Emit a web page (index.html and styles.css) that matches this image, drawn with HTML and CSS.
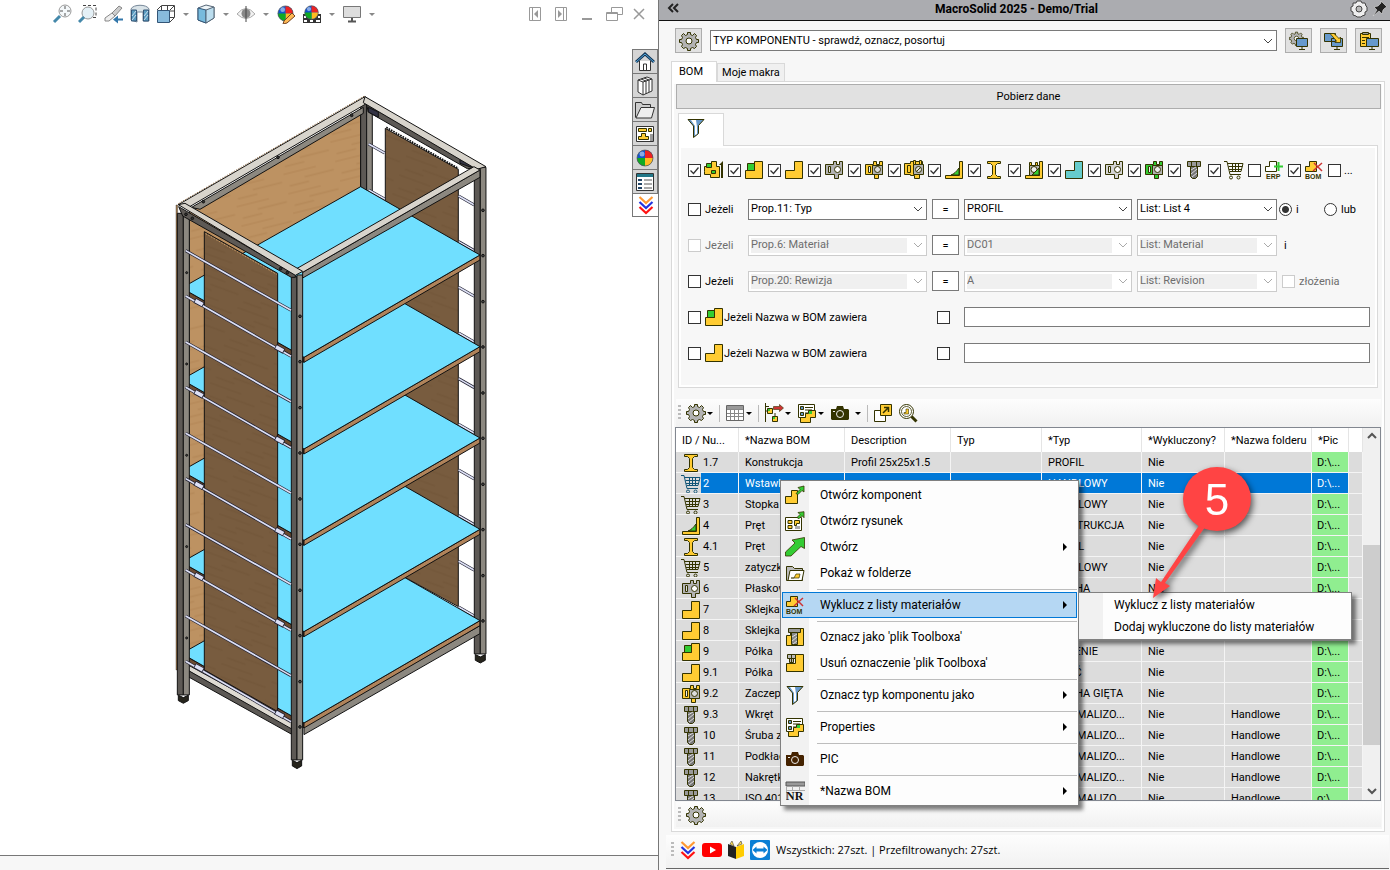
FILE: index.html
```html
<!DOCTYPE html>
<html lang="pl">
<head>
    <meta charset="UTF-8">
    <meta name="viewport" content="width=device-width, initial-scale=1.0">
    <title>MacroSolid 2025</title>
    <link rel="stylesheet" href="styles.css">
</head>
<body>

<!-- Icons -->
<svg class="defs" width="0" height="0" aria-hidden="true">
    <symbol id="part" viewBox="0 0 20 20"><path d="M1.500 10.500h9v-9h8v17h-17z" fill="#fc3" stroke="#330"/></symbol>
    <symbol id="partb" viewBox="0 0 20 20"><path d="M1.500 10.500h9v-9h8v17h-17z" fill="#6cc" stroke="#330"/></symbol>
    <symbol id="asm" viewBox="0 0 20 20"><path d="M1.500 10.500h9v-9h8v17h-17z" fill="#fc3" stroke="#330"/><path d="M3.500 3.500h7v7h-7z" fill="#3c3" stroke="#330"/></symbol>
    <symbol id="asmtop" viewBox="0 0 20 20"><path d="M.5 11.500v-5h7v-5h5v5h3v11h-9v-3h-6z" fill="#fc3" stroke="#330"/><path d="M2.500 3.500h5v4h-5zM7.500 10.500h4v3h-4z" fill="#3c3" stroke="#330"/><path d="M15 5l4-4v17h-2V5z" fill="#330"/></symbol>
    <symbol id="sheet" viewBox="0 0 20 20"><path d="M1.500 4.500h8v-3h3v3h3v-3h3v13h-4v4h-4v-4h-9z" fill="#b3b3b3" stroke="#330"/><path d="M4.500 6.500h2v6h-2z" fill="#ddd" stroke="#330"/><circle cx="13.500" cy="9.500" r="3" fill="#fff" stroke="#330"/></symbol>
    <symbol id="sheetl" viewBox="0 0 20 20"><path d="M1.500 4.500h8v-3h3v3h3v-3h3v13h-4v4h-4v-4h-9z" fill="#d5d5d5" stroke="#330"/><path d="M4.500 6.500h2v6h-2z" fill="#eee" stroke="#330"/><circle cx="13.500" cy="9.500" r="3" fill="#fff" stroke="#330"/></symbol>
    <symbol id="sheety" viewBox="0 0 20 20"><path d="M1.500 4.500h8v-3h3v3h3v-3h3v13h-4v4h-4v-4h-9z" fill="#fc3" stroke="#330"/><path d="M8.500 5.500h10v9h-10z" fill="#b3b3b3" stroke="#330"/><path d="M4.500 6.500h2v6h-2z" fill="#eee" stroke="#330"/><circle cx="13.500" cy="9.500" r="3" fill="#ddd" stroke="#330"/></symbol>
    <symbol id="sheetg" viewBox="0 0 20 20"><path d="M1.500 4.500h8v-3h3v3h3v-3h3v13h-4v4h-4v-4h-9z" fill="#3c3" stroke="#330"/><path d="M8.500 5.500h10v9h-10z" fill="#b3b3b3" stroke="#330"/><path d="M4.500 6.500h2v6h-2z" fill="#eee" stroke="#330"/><circle cx="13.500" cy="9.500" r="3" fill="#eee" stroke="#330"/></symbol>
    <symbol id="sheetm" viewBox="0 0 20 20"><path d="M.5 3.500h6v-2h12v13h-3v4h-5v-3h-4v-1h-6z" fill="#fc3" stroke="#330"/><path d="M3.500 5.500h3v7h-3z" fill="#fc3" stroke="#330"/><path d="M9.500 4.500h10v10h-10z" fill="#b3b3b3" stroke="#330"/><path d="M9.500.5h2v4h-2zM15.500.5h2v4h-2z" fill="#fc3" stroke="#330"/><circle cx="14.500" cy="9.500" r="3" fill="#ddd" stroke="#330"/><path d="M12.500 11.500l4-4" stroke="#330"/></symbol>
    <symbol id="angle" viewBox="0 0 20 20"><path d="M7 15c3-1 5-3 8-7v7z" fill="#3c3" stroke="#330"/><path d="M15.500 1.500h3v17h-17v-3h14z" fill="#fc3" stroke="#330"/></symbol>
    <symbol id="beam" viewBox="0 0 20 20"><path d="M3.500 1.500h13v2h-3l-2 2v9l2 2h3v2h-13v-2h3l2-2v-9l-2-2h-3z" fill="#fc3" stroke="#330"/></symbol>
    <symbol id="anglem" viewBox="0 0 20 20"><path d="M15.500 1.500h3v17h-17v-3h14z" fill="#fc3" stroke="#330"/><path d="M5.500 15.500v-10h10v10z" fill="#b3b3b3" stroke="#330"/><path d="M5.500 2.500h2v3h-2zM11.500 2.500h2v3h-2z" fill="#fc3" stroke="#330"/><circle cx="10" cy="9.500" r="3" fill="#eee" stroke="#330"/><path d="M8 15l7-7v7z" fill="#3c3" stroke="#330"/></symbol>
    <symbol id="bolt" viewBox="0 0 20 20"><path d="M3.500 1.500h13v5h-13z" fill="#999" stroke="#330"/><path d="M7.500 1.500v5m5-5v5" stroke="#330"/><path d="M6.500 6.500h7v10l-2 2h-3l-2-2z" fill="#777" stroke="#330"/><path d="M7 10l5-3M7 14l6-5M8 17l5-4" stroke="#ddd"/></symbol>
    <symbol id="cart" viewBox="0 0 20 20" fill="none"><path d="M0 1.500h3l3 13h11M4 3.500h15l-2 8H6M4.500 6.500h14M5 9.500h13M8.500 4v7M11.500 4v7M14.500 4v7" stroke="currentColor"/><circle cx="7" cy="17.500" r="1.500" stroke="currentColor"/><circle cx="14.500" cy="17.500" r="1.500" stroke="currentColor"/></symbol>
    <symbol id="erp" viewBox="0 0 20 20"><path d="M1.500 6.500h4v-5h7v10h-11z" fill="#fff" stroke="#330"/><path d="M14.500 2v9M10 6.500h9" stroke="#3c3" stroke-width="2"/><text x="2" y="19" class="tag">ERP</text></symbol>
    <symbol id="bomx" viewBox="0 0 20 20"><path d="M1.500 6.500h4v-5h7v10h-11z" fill="#fc3" stroke="#330"/><path d="M10 3l8 8M18 3l-9 8" stroke="#c33" stroke-width="1.500"/><text x="1" y="19" class="tag">BOM</text></symbol>
    <symbol id="gear" viewBox="0 0 20 20"><path d="M8.500 1.500h3v2l2 1 2-2 2 2-1 2 1 2h2v3h-2l-1 2 1 2-2 2-2-1-2 1v2h-3v-2l-2-1-2 1-2-2 1-2-1-2h-2v-3h2l1-2-1-2 2-2 2 2 2-1z" fill="#b3b3b3" stroke="#330"/><circle cx="10" cy="10" r="3" fill="#fff" stroke="#330"/></symbol>
    <symbol id="funnel" viewBox="0 0 20 20"><path d="M2 1.500h16l-5.500 6v8l-5 4V8z" fill="#69c" stroke="#330"/><path d="M5 2h5l1 7v7l-2 1V8z" fill="#fff"/></symbol>
    <symbol id="gearpc" viewBox="0 0 20 20"><use href="#gear" width="15" height="15"/><path d="M7.500 7.500h11v8h-11z" fill="#69c" stroke="#330"/><path d="M10 18.500h6M13 16v2" stroke="#330"/></symbol>
    <symbol id="pcpc" viewBox="0 0 20 20"><path d="M.5 2.500h11v8H.5zM7.500 7.500h11v8h-11z" fill="#69c" stroke="#330"/><path d="M10 18.500h6M13 16v2" stroke="#330"/><path d="M6 2.500h4l5 5 1.500-1.500v5.500h-5.500l1.500-1.500z" fill="#fc3" stroke="#330" stroke-width=".8"/></symbol>
    <symbol id="clippc" viewBox="0 0 20 20"><path d="M1.500 2.500h10v13h-10z" fill="#fc3" stroke="#330"/><path d="M3.500 1.500h6v2h-6z" fill="#999" stroke="#330"/><path d="M3 6.500h7M3 9.500h3M3 12.500h3" stroke="#330"/><path d="M7.500 7.500h12v8h-12z" fill="#69c" stroke="#330"/><path d="M10 18.500h6M13 16v2" stroke="#330"/></symbol>
    <symbol id="grid" viewBox="0 0 20 20"><path d="M1.500 2.500h17v15h-17z" fill="#fff" stroke="#666"/><path d="M2 3h16v3H2z" fill="#999"/><path d="M2 6.500h16M2 10.500h16M2 13.500h16M5.500 6v11M9.500 6v11M13.500 6v11" stroke="#888"/></symbol>
    <symbol id="tree" viewBox="0 0 20 20"><path d="M1.500 0v19M2 8h3M2 3.500h3M11 10v4" stroke="#330"/><path d="M3.500 5.500h5v5h-5zM8.500 13.500h5v5h-5z" fill="#fc3" stroke="#330"/><path d="M4 6h2v2H4zM9 14h2v2H9z" fill="#3c3"/><path d="M9.500 3.500h6V1.500l4 3.500-4 3.500v-2h-6z" fill="#c33" stroke="#330" stroke-width=".6"/></symbol>
    <symbol id="props" viewBox="0 0 20 20"><path d="M1.500 1.500h16v13h-16z" fill="#fff" stroke="#330"/><path d="M3.500 3.500h3v3h-3zM3.500 9.500h3v3h-3z" fill="#69c" stroke="#330"/><path d="M8 4.500h8M8 7h7M8 10h3" stroke="#330"/><path d="M3.500 14.500h5v-4h3v-3h7v7h-5v5h-10z" fill="#fc3" stroke="#330"/><path d="M12 8h3v3h-3z" fill="#3c3"/></symbol>
    <symbol id="camera" viewBox="0 0 20 20"><path d="M1 6h5l1-3h6l1 3h4l1 1v9l-1 1H2l-1-1z" fill="currentColor"/><circle cx="10" cy="11" r="3.500" fill="none" stroke="#eee"/><path d="M3 8h2v1H3z" fill="#eee"/></symbol>
    <symbol id="popout" viewBox="0 0 20 20"><path d="M1.500 7.500h11v11h-11z" fill="#fff" stroke="#330"/><path d="M7.500 1.500h11v11h-11z" fill="#fc3" stroke="#330"/><path d="M10 10l5-5M11 4.500h4.500V9" fill="none" stroke="#330" stroke-width="1.500"/></symbol>
    <symbol id="find" viewBox="0 0 20 20"><circle cx="8.500" cy="8.500" r="7" fill="#fff" stroke="#330"/><circle cx="8.500" cy="8.500" r="5" fill="#fff" stroke="#330" stroke-width=".8"/><path d="M6 9.500h2V6h2.500v5H6z" fill="#fc3" stroke="#330" stroke-width=".6"/><path d="M13.500 13.500l5 5" stroke="#330" stroke-width="3"/></symbol>
    <symbol id="openc" viewBox="0 0 20 20"><path d="M.5 11.500h6v-6h6v13H.5z" fill="#fc3" stroke="#330"/><path d="M11 8.500l4-4-2-2 6-1.500v6l-2-1.500-4 4z" fill="#3c3" stroke="#330" stroke-width=".8"/></symbol>
    <symbol id="opend" viewBox="0 0 20 20"><path d="M.5 6.500h16v13H.5z" fill="#fff" stroke="#330"/><path d="M3 9.500h4v3H3zM9.500 9.500h5v3h-3v2h-2zM3 17.500v-3h4v3z" fill="#fc3" stroke="#330"/><path d="M10 15h5v3h-5z" fill="#aaa"/><path d="M12 6.500l3-3-2-2 6-.8v6l-2-2-3 3z" fill="#3c3" stroke="#330" stroke-width=".8"/></symbol>
    <symbol id="arrow" viewBox="0 0 20 20"><path d="M.5 19v-4l9.500-9-3-3 12.500-2.500v11l-3.500-2-10 9.500z" fill="#3c3" stroke="#330" stroke-width=".8"/></symbol>
    <symbol id="folder" viewBox="0 0 20 20"><path d="M1.500 17.500v-14h6l2 2h8v12z" fill="#bbb" stroke="#330"/><path d="M3 17.500l2-10h14l-2 10z" fill="#fff" stroke="#330"/><path d="M6 15h3l2-4h4l-1 4z" fill="#fc3" stroke="#330" stroke-width=".7"/></symbol>
    <symbol id="tbon" viewBox="0 0 20 20"><path d="M1.500 8.500h4v-7h13v17h-17z" fill="#fc3" stroke="#330"/><path d="M3.500 1.500h12v4h-12z" fill="#999" stroke="#330"/><path d="M6.500 5.500h6v12h-6z" fill="#888" stroke="#330"/><path d="M7 10l5-3M7 14l5-4M8 17l4-3" stroke="#ddd"/></symbol>
    <symbol id="tboff" viewBox="0 0 20 20"><path d="M1.500 10.500h9v-9h8v17h-17z" fill="#fc3" stroke="#330"/><path d="M2.500 1.500h8v4h-8zM4.500 5.500h4v4h-4zM6.500 2v8" fill="#bbb" stroke="#330"/></symbol>
    <symbol id="nr" viewBox="0 0 20 20"><path d="M1 1h19v4H1z" fill="#999" stroke="#555"/><path d="M1.500 5v14M7.500 5v5M14.500 5v5M1 9.500h19" stroke="#aaa"/><text x="1" y="19" class="nr">NR</text></symbol>
    <symbol id="chev3" viewBox="0 0 20 20" fill="none" stroke-width="2.200"><path d="M3.500 2l6.500 6 6.500-6" stroke="#f93"/><path d="M3.500 7l6.500 6 6.500-6" stroke="#23d"/><path d="M3.500 12l6.500 6 6.500-6" stroke="#f11"/></symbol>
    <symbol id="ball" viewBox="0 0 20 20"><circle cx="10" cy="10" r="8" fill="#15c"/><path d="M10 10V2a8 8 0 0 1 8 8z" fill="#e22"/><path d="M10 10h8a8 8 0 0 1-8 8z" fill="#fb2"/><path d="M10 10v8a8 8 0 0 1-8-8z" fill="#1a2"/><circle cx="7" cy="6" r="2.500" fill="#fff" opacity=".5"/><circle cx="10" cy="10" r="8" fill="none" stroke="#555" stroke-width=".7"/></symbol>
    <pattern id="woodl" width="160" height="60" patternUnits="userSpaceOnUse" patternTransform="rotate(-14)"><rect width="160" height="60" fill="#bd9262"/><path d="M0 12h100M60 34h90M10 50h60" stroke="#b68a5a" stroke-width="5"/></pattern>
    <pattern id="woodd" width="160" height="60" patternUnits="userSpaceOnUse" patternTransform="rotate(20)"><rect width="160" height="60" fill="#785c3f"/><path d="M0 12h100M60 34h90M10 50h60" stroke="#74583b" stroke-width="5"/></pattern>
</svg>

<div class="app">
    <!-- Model view -->
    <main class="view">
        <div class="view-bar">
            <svg class="ico"><circle cx="13" cy="7" r="6" fill="#f4f8fa" stroke="#999"/><path d="M13 2v3M13 9v3M8 7h3M15 7h3" stroke="#555"/><path d="M2 18l6-6" stroke="#48a" stroke-width="3"/></svg>
            <svg class="ico"><path d="M5 1.500h13v12h-5" fill="none" stroke="#444" stroke-dasharray="3 2"/><circle cx="10" cy="9" r="6" fill="#e4f0f6" stroke="#999"/><path d="M1 18l5-5" stroke="#48a" stroke-width="3"/></svg>
            <svg class="ico"><path d="M1 14l7-5 3 3-6 5H1z" fill="#eee" stroke="#888"/><path d="M8 9l7-7 3 2-7 8z" fill="#ccc" stroke="#888"/><path d="M19 14.500h-5v-3l-5 4 5 4v-3h5z" fill="#37a"/></svg>
            <svg class="ico"><path d="M1 5c2-5 16-5 18 0v12h-6V8H7v10l-6-2z" fill="#d9e3e8" stroke="#789"/><path d="M1.500 6h5v11h-5zM13.500 6h5v11h-5z" fill="#5a9cc0" stroke="#357"/><path d="M2 12l4-5M2 16l4-5M14 12l4-5M14 16l4-5" stroke="#cde"/></svg>
            <svg class="ico"><path d="M5.500 1.500h13v12h-13zM1 6l4-4M14 6l4-4M14 18l4-4M11.500 2v11M5 7h13" fill="none" stroke="#444"/><path d="M1.500 6.500h12v12h-12z" fill="#8bd" stroke="#357"/></svg>
            <span class="drop"></span>
            <svg class="ico"><path d="M2 4l8-3 8 2v11l-8 5-8-3z" fill="#eef5f8" stroke="#567"/><path d="M2 4l8 2v13l-8-3z" fill="#7bd" stroke="#357"/><path d="M10 6l8-3v11l-8 5z" fill="#bde" stroke="#567"/></svg>
            <span class="drop"></span>
            <svg class="ico"><path d="M1 10q9-11 18 0-9 9-18 0z" fill="#f2f2f2" stroke="#aaa"/><circle cx="10" cy="9.500" r="4.500" fill="#888"/><path d="M10 2v16" stroke="#444"/></svg>
            <span class="drop"></span>
            <svg class="ico"><use href="#ball" width="19" height="19"/><path d="M8 17l8-8 3 3-8 7-4 1z" fill="#fb5" stroke="#742"/></svg>
            <svg class="ico"><path d="M1 10h18v9H1z" fill="#333"/><path d="M2 12h2v2H2zM16 12h2v2h-2zM2 16h3v2H2zM8 16h3v2H8zM14 16h4v2h-4z" fill="#fff"/><use href="#ball" x="1" width="17" height="17"/></svg>
            <span class="drop"></span>
            <svg class="ico"><path d="M1.500 2.500h17v11h-17z" fill="#ddd" stroke="#777"/><path d="M10 14v3M6 17.500h8" stroke="#555" stroke-width="2"/></svg>
            <span class="drop"></span>
            <div class="win-ctl">
                <svg class="ico"><path d="M4.500 3.500h11v13h-11zM7.500 4v12" /><path d="M13 6v8l-4-4z" class="tri"/></svg>
                <svg class="ico"><path d="M4.500 3.500h11v13h-11zM12.500 4v12"/><path d="M7 6v8l4-4z" class="tri"/></svg>
                <svg class="ico"><path d="M5 15h10" stroke-width="2"/></svg>
                <svg class="ico"><path d="M8.500 9v-5.500h11v7h-5M3.500 8.500h11v8h-11zM3 9.500h11"/></svg>
                <svg class="ico"><path d="M5 5l10 10M15 5L5 15" stroke-width="1.500"/></svg>
            </div>
        </div>
        <div class="canvas">
            <svg class="model" viewBox="0 28 632 827">
                <g transform="translate(150 80) scale(.3333)" stroke="#111" stroke-width="3">
                    <!-- back wall, back posts, right side panel -->
                    <path d="M118 395L632 95v1400L118 1780z" fill="url(#woodl)"/>
                    <path d="M632 70h18v400h-18z" fill="#5d5955"/>
                    <path d="M650 75h17v400h-17z" fill="#8c8880"/>
                    <path d="M706 145L925 268v1312L706 1460z" fill="url(#woodd)"/>
                    <path d="M709 142L925 265" stroke-width="5" stroke-dasharray="5 3"/>
                    <!-- rods on the right side -->
                    <g class="rod">
                        <path d="M656 192l48 27M656 330l48 27M926 348l47 27M926 485l47 27M926 622l47 27M926 759l47 27M926 896l47 27M926 1033l47 27M926 1170l47 27M926 1307l47 27M926 1444l47 27M926 1581l47 27"/>
                        <path class="rod-in" d="M656 192l48 27M656 330l48 27M926 348l47 27M926 485l47 27M926 622l47 27M926 759l47 27M926 896l47 27M926 1033l47 27M926 1170l47 27M926 1307l47 27M926 1444l47 27M926 1581l47 27"/>
                    </g>
                    <path d="M973 275h18v1447h-18z" fill="#5d5955"/>
                    <!-- shelves, bottom one first -->
                    <path d="M105 1765L425 1945v18L105 1785z" fill="#5d5955"/>
                    <path d="M105 1750L425 1925v22L105 1766z" fill="#dedad2"/>
                    <path d="M462 1940L990 1637v24L462 1964z" fill="#8c8880"/>
                    <g id="shelf">
                        <path d="M95 1721L462 1929v15L95 1736z" fill="#6b4a30"/>
                        <path d="M462 1929L990 1622v15L462 1944z" fill="#b0835a"/>
                        <path d="M632 1417L990 1622 462 1929 95 1721z" fill="#70dfff"/>
                    </g>
                    <use href="#shelf" y="-274"/>
                    <use href="#shelf" y="-548"/>
                    <use href="#shelf" y="-822"/>
                    <use href="#shelf" y="-1097"/>
                    <!-- left side panel -->
                    <path d="M163 455L383 580v1315L163 1770z" fill="url(#woodd)"/>
                    <path d="M167 461L380 583" stroke="#c89b66" stroke-dasharray="5 4"/>
                    <!-- posts -->
                    <path d="M78 375h5v1395h-5z" fill="#a37c51" stroke-width="1"/>
                    <path d="M82 400h18v1445h-18zM424 590h17v1450h-17z" fill="#5d5955"/>
                    <path d="M100 405h18v1440h-18zM441 585h17v1455h-17zM991 262h17v1460h-17z" fill="#8c8880"/>
                    <path d="M85 1846l15 7 15-7v16l-15 8-15-8zM427 2041l14 7 14-7v17l-14 8-14-8zM976 1724l15 7 15-7v17l-15 8-15-8z" fill="#26241c"/>
                    <g id="holes" fill="#444">
                        <circle cx="450" cy="709" r="4"/><circle cx="450" cy="845" r="4"/>
                        <circle cx="999" cy="391" r="4"/><circle cx="999" cy="527" r="4"/>
                        <circle cx="110" cy="578" r="3"/>
                    </g>
                    <use href="#holes" y="274"/><use href="#holes" y="548"/><use href="#holes" y="822"/><use href="#holes" y="1096"/>
                    <!-- rods on the left side -->
                    <g id="rung" class="rod">
                        <path d="M107 512L423 691M107 648L423 829"/>
                        <path class="rod-in" d="M107 512L423 691M107 648L423 829"/>
                        <path class="nut" d="M134 661l26 14M376 800l26 14"/>
                        <path class="nut-in" d="M136 662l22 12M378 801l22 12"/>
                    </g>
                    <use href="#rung" y="274"/><use href="#rung" y="548"/><use href="#rung" y="822"/><use href="#rung" y="1096"/>
                    <!-- top frame -->
                    <path d="M125 382L640 82v18L150 388z" fill="#8c8880"/>
                    <path d="M85 374L645 50l16 14L112 384z" fill="#d8d4cc"/>
                    <path d="M85 371L645 47" stroke="#8d6a45" stroke-dasharray="4 4"/>
                    <path d="M650 74L980 264l-28 2L655 96z" fill="#5d5955"/>
                    <path d="M655 82l30 14v16l-30-16zM930 236l34 14v12l-34-12z" fill="#334"/>
                    <path d="M645 50L1008 260l-28 8L640 68z" fill="#d8d4cc"/>
                    <path d="M458 577L990 270v22L458 594z" fill="#8c8880"/>
                    <path d="M440 566L972 260l18 10L458 577z" fill="#d8d4cc"/>
                    <path d="M86 380L436 584v8h-12L98 408z" fill="#5d5955"/>
                    <path d="M85 374l20-4 353 204-22 12z" fill="#d8d4cc"/>
                    <g fill="#333"><circle cx="108" cy="403" r="4"/><circle cx="127" cy="415" r="4"/><circle cx="392" cy="566" r="4"/><circle cx="412" cy="578" r="4"/><circle cx="384" cy="232" r="4"/><circle cx="605" cy="106" r="4"/><circle cx="160" cy="365" r="4"/></g>
                </g>
            </svg>
            <nav class="side">
                <button aria-label="Zasoby"><svg class="ico"><path d="M4.500 9v9.500h11V9" fill="#fff" stroke="#333"/><path d="M8.500 18v-6h3v6" fill="none" stroke="#333"/><path d="M1 10l9-8 9 8" fill="none" stroke="#135" stroke-width="3"/><path d="M1 10l9-8 9 8" fill="none" stroke="#5ad"/></svg></button>
                <button aria-label="Biblioteka"><svg class="ico"><path d="M3 4l9-3 5 2v12l-9 4-5-3z" fill="#fff" stroke="#333"/><path d="M3 4l5 2v13M8 6l9-3M6 3l5 2v13M9 2l5 2v12" fill="none" stroke="#333"/></svg></button>
                <button aria-label="Eksplorator plików"><svg class="ico"><path d="M.5 17.500v-15h6l1 2h8v3" fill="#ccc" stroke="#333"/><path d="M1 18L6 7.500h13.500l-3 10.500z" fill="#eee" stroke="#333"/></svg></button>
                <button aria-label="Paleta widoków"><svg class="ico"><path d="M1.500 2.500h17v15h-17z" fill="#fff" stroke="#333"/><path d="M3.500 4.500h8v3h-8zM13.500 4.500h3v3h-3zM6.500 9.500h4v3h3v3h-10v-3h3z" fill="#fc3" stroke="#330"/><path d="M15 10h3v7h-3z" fill="#999"/></svg></button>
                <button aria-label="Wyglądy"><svg class="ico"><use href="#ball"/></svg></button>
                <button aria-label="Właściwości"><svg class="ico"><path d="M1.500 1.500h17v17h-17z" fill="#fff" stroke="#333"/><path d="M2 2h16v3H2z" fill="#278"/><path d="M3 7h4v2H3zM3 11h4v2H3zM3 15h4v2H3z" fill="#246"/><path d="M9 8h8M9 12h8M9 16h8" stroke="#555"/></svg></button>
                <button class="on" aria-label="MacroSolid"><svg class="ico"><use href="#chev3"/></svg></button>
            </nav>
        </div>
        <div class="view-foot"></div>
    </main>

    <!-- MacroSolid pane -->
    <section class="pane">
        <header class="title">
            <svg class="ico"><path d="M9 5l-4 4 4 4M14 5l-4 4 4 4" fill="none" stroke="#222" stroke-width="2"/></svg>
            <h1>MacroSolid 2025 - Demo/Trial</h1>
            <svg class="ico"><path d="M8 2h4l1 2h3l1 3 1 1v4l-2 1v3l-3 1-1 1H8l-1-1-3-1v-3l-2-1V8l2-1V4h3z" fill="#eee" stroke="#444"/><circle cx="10" cy="10" r="3" fill="#bbb" stroke="#444"/></svg>
            <svg class="ico"><path d="M12 2l6 6-2 1-2 2-1 4-3-3-6 5 4-6-3-3 4-1 3-3z" fill="#222" stroke="#ddd" stroke-width=".6"/></svg>
        </header>

        <div class="macro">
            <button class="sq" aria-label="Ustawienia"><svg class="ico"><use href="#gear"/></svg></button>
            <select class="field" aria-label="Makro"><option>TYP KOMPONENTU - sprawdź, oznacz, posortuj</option></select>
            <button class="sq" aria-label="Opcje"><svg class="ico"><use href="#gearpc"/></svg></button>
            <button class="sq" aria-label="Kopiuj"><svg class="ico"><use href="#pcpc"/></svg></button>
            <button class="sq" aria-label="Wklej"><svg class="ico"><use href="#clippc"/></svg></button>
        </div>

        <div class="tabs">
            <button class="tab on">BOM</button>
            <button class="tab">Moje makra</button>
        </div>

        <div class="page">
            <button class="load">Pobierz dane</button>

            <button class="tab filter-tab" aria-label="Filtr"><svg class="ico"><use href="#funnel"/></svg></button>
            <div class="filter">
                <div class="types">
                    <label><input type="checkbox" checked><svg class="ico"><use href="#asmtop"/></svg></label>
                    <label><input type="checkbox" checked><svg class="ico"><use href="#asm"/></svg></label>
                    <label><input type="checkbox" checked><svg class="ico"><use href="#part"/></svg></label>
                    <label><input type="checkbox" checked><svg class="ico"><use href="#sheet"/></svg></label>
                    <label><input type="checkbox" checked><svg class="ico"><use href="#sheety"/></svg></label>
                    <label><input type="checkbox" checked><svg class="ico"><use href="#sheetm"/></svg></label>
                    <label><input type="checkbox" checked><svg class="ico"><use href="#angle"/></svg></label>
                    <label><input type="checkbox" checked><svg class="ico"><use href="#beam"/></svg></label>
                    <label><input type="checkbox" checked><svg class="ico"><use href="#anglem"/></svg></label>
                    <label><input type="checkbox" checked><svg class="ico"><use href="#partb"/></svg></label>
                    <label><input type="checkbox" checked><svg class="ico"><use href="#sheetl"/></svg></label>
                    <label><input type="checkbox" checked><svg class="ico"><use href="#sheetg"/></svg></label>
                    <label><input type="checkbox" checked><svg class="ico"><use href="#bolt"/></svg></label>
                    <label><input type="checkbox" checked><svg class="ico"><use href="#cart"/></svg></label>
                    <label><input type="checkbox"><svg class="ico"><use href="#erp"/></svg></label>
                    <label><input type="checkbox" checked><svg class="ico"><use href="#bomx"/></svg></label>
                    <label><input type="checkbox">...</label>
                </div>

                <div class="cond">
                    <label><input type="checkbox"> Jeżeli</label>
                    <select class="field" aria-label="Właściwość 1"><option>Prop.11: Typ</option></select>
                    <button class="eq">=</button>
                    <select class="field" aria-label="Wartość 1"><option>PROFIL</option></select>
                    <select class="field" aria-label="Lista 1"><option>List: List 4</option></select>
                    <div class="radios">
                        <label><input type="radio" name="op" checked> i</label>
                        <label><input type="radio" name="op"> lub</label>
                    </div>
                </div>
                <div class="cond">
                    <label class="off"><input type="checkbox" disabled> Jeżeli</label>
                    <select class="field" aria-label="Właściwość 2" disabled><option>Prop.6: Materiał</option></select>
                    <button class="eq">=</button>
                    <select class="field" aria-label="Wartość 2" disabled><option>DC01</option></select>
                    <select class="field" aria-label="Lista 2" disabled><option>List: Material</option></select>
                    <span class="and">i</span>
                </div>
                <div class="cond">
                    <label><input type="checkbox"> Jeżeli</label>
                    <select class="field" aria-label="Właściwość 3" disabled><option>Prop.20: Rewizja</option></select>
                    <button class="eq">=</button>
                    <select class="field" aria-label="Wartość 3" disabled><option>A</option></select>
                    <select class="field" aria-label="Lista 3" disabled><option>List: Revision</option></select>
                    <label class="off"><input type="checkbox" disabled> złożenia</label>
                </div>
                <div class="cond">
                    <label class="name"><input type="checkbox"><svg class="ico"><use href="#asm"/></svg>Jeżeli Nazwa w BOM zawiera</label>
                    <input type="checkbox" class="mid" aria-label="Nie zawiera">
                    <input type="text" class="text" aria-label="Nazwa złożenia">
                </div>
                <div class="cond">
                    <label class="name"><input type="checkbox"><svg class="ico"><use href="#part"/></svg>Jeżeli Nazwa w BOM zawiera</label>
                    <input type="checkbox" class="mid" aria-label="Nie zawiera">
                    <input type="text" class="text" aria-label="Nazwa części">
                </div>
            </div>

            <div class="tools">
                <span class="grip"></span>
                <button aria-label="Ustawienia"><svg class="ico"><use href="#gear"/></svg><span class="caret"></span></button>
                <span class="sep"></span>
                <button aria-label="Tabela"><svg class="ico"><use href="#grid"/></svg><span class="caret"></span></button>
                <span class="sep"></span>
                <button aria-label="Drzewo"><svg class="ico"><use href="#tree"/></svg><span class="caret"></span></button>
                <button aria-label="Properties"><svg class="ico"><use href="#props"/></svg><span class="caret"></span></button>
                <button class="cam" aria-label="PIC"><svg class="ico"><use href="#camera"/></svg><span class="caret"></span></button>
                <span class="sep"></span>
                <button aria-label="Otwórz"><svg class="ico"><use href="#popout"/></svg></button>
                <button aria-label="Szukaj"><svg class="ico"><use href="#find"/></svg></button>
            </div>

            <div class="list">
                <div class="rows">
                    <table>
                        <colgroup><col class="c1"><col class="c2"><col class="c2"><col class="c3"><col class="c4"><col class="c5"><col class="c6"><col class="c7"><col></colgroup>
                        <thead>
                            <tr><th>ID / Nu...</th><th>*Nazwa BOM</th><th>Description</th><th>Typ</th><th>*Typ</th><th>*Wykluczony?</th><th>*Nazwa folderu</th><th>*Pic</th><th></th></tr>
                        </thead>
                        <tbody>
                            <tr><td><svg class="ico"><use href="#beam"/></svg>1.7</td><td>Konstrukcja</td><td>Profil 25x25x1.5</td><td></td><td>PROFIL</td><td>Nie</td><td></td><td>D:\...</td><td></td></tr>
                            <tr class="sel"><td><svg class="ico"><use href="#cart"/></svg>2</td><td>Wstawka</td><td></td><td></td><td>HANDLOWY</td><td>Nie</td><td></td><td>D:\...</td><td></td></tr>
                            <tr><td><svg class="ico"><use href="#cart"/></svg>3</td><td>Stopka</td><td></td><td></td><td>HANDLOWY</td><td>Nie</td><td></td><td>D:\...</td><td></td></tr>
                            <tr><td><svg class="ico"><use href="#angle"/></svg>4</td><td>Pręt</td><td></td><td></td><td>KONSTRUKCJA</td><td>Nie</td><td></td><td>D:\...</td><td></td></tr>
                            <tr><td><svg class="ico"><use href="#beam"/></svg>4.1</td><td>Pręt</td><td></td><td></td><td>PROFIL</td><td>Nie</td><td></td><td>D:\...</td><td></td></tr>
                            <tr><td><svg class="ico"><use href="#cart"/></svg>5</td><td>zatyczka</td><td></td><td></td><td>HANDLOWY</td><td>Nie</td><td></td><td>D:\...</td><td></td></tr>
                            <tr><td><svg class="ico"><use href="#sheet"/></svg>6</td><td>Płaskownik</td><td></td><td></td><td>BLACHA</td><td>Nie</td><td></td><td>D:\...</td><td></td></tr>
                            <tr><td><svg class="ico"><use href="#part"/></svg>7</td><td>Sklejka</td><td></td><td></td><td>CZĘŚĆ</td><td>Nie</td><td></td><td>D:\...</td><td></td></tr>
                            <tr><td><svg class="ico"><use href="#part"/></svg>8</td><td>Sklejka</td><td></td><td></td><td>CZĘŚĆ</td><td>Nie</td><td></td><td>D:\...</td><td></td></tr>
                            <tr><td><svg class="ico"><use href="#asm"/></svg>9</td><td>Półka</td><td></td><td></td><td>ZŁOŻENIE</td><td>Nie</td><td></td><td>D:\...</td><td></td></tr>
                            <tr><td><svg class="ico"><use href="#part"/></svg>9.1</td><td>Półka</td><td></td><td></td><td>CZĘŚĆ</td><td>Nie</td><td></td><td>D:\...</td><td></td></tr>
                            <tr><td><svg class="ico"><use href="#sheety"/></svg>9.2</td><td>Zaczep</td><td></td><td></td><td>BLACHA GIĘTA</td><td>Nie</td><td></td><td>D:\...</td><td></td></tr>
                            <tr><td><svg class="ico"><use href="#bolt"/></svg>9.3</td><td>Wkręt</td><td></td><td></td><td>ZNORMALIZO...</td><td>Nie</td><td>Handlowe</td><td>D:\...</td><td></td></tr>
                            <tr><td><svg class="ico"><use href="#bolt"/></svg>10</td><td>Śruba z łbem</td><td></td><td></td><td>ZNORMALIZO...</td><td>Nie</td><td>Handlowe</td><td>D:\...</td><td></td></tr>
                            <tr><td><svg class="ico"><use href="#bolt"/></svg>11</td><td>Podkładka</td><td></td><td></td><td>ZNORMALIZO...</td><td>Nie</td><td>Handlowe</td><td>D:\...</td><td></td></tr>
                            <tr><td><svg class="ico"><use href="#bolt"/></svg>12</td><td>Nakrętka</td><td></td><td></td><td>ZNORMALIZO...</td><td>Nie</td><td>Handlowe</td><td>D:\...</td><td></td></tr>
                            <tr><td><svg class="ico"><use href="#bolt"/></svg>13</td><td>ISO 4017</td><td></td><td></td><td>ZNORMALIZO...</td><td>Nie</td><td>Handlowe</td><td>o:\...</td><td></td></tr>
                        </tbody>
                    </table>
                </div>
                <div class="scroll">
                    <svg width="17" height="17"><path d="M5 10l4-4 4 4" fill="none" stroke="#555" stroke-width="2"/></svg>
                    <div class="track"><div class="thumb"></div></div>
                    <svg width="17" height="17"><path d="M5 6l4 4 4-4" fill="none" stroke="#555" stroke-width="2"/></svg>
                </div>
            </div>

            <div class="tools foot-tools">
                <span class="grip"></span>
                <button aria-label="Ustawienia"><svg class="ico"><use href="#gear"/></svg></button>
            </div>
        </div>

        <footer class="status">
            <span class="grip"></span>
            <svg class="ico"><use href="#chev3"/></svg>
            <svg class="ico"><rect y="3" width="20" height="14" rx="3" fill="#f00"/><path d="M8 6.500v7l6-3.500z" fill="#fff"/></svg>
            <svg class="ico"><path d="M2 4l8 3v12l-8-3z" fill="#222"/><path d="M10 7l8-3v12l-8 3z" fill="#fc0"/><path d="M4 4l2-3 2 5zM11 6l4-5 1 3z" fill="#fd5" stroke="#222" stroke-width=".5"/></svg>
            <svg class="ico"><rect width="20" height="20" rx="1" fill="#0a7fd4"/><circle cx="10" cy="10" r="8" fill="#fff"/><path d="M2.500 10l4-3.500v2h7v-2l4 3.500-4 3.500v-2h-7v2z" fill="#0a7fd4"/></svg>
            <span>Wszystkich: 27szt. | Przefiltrowanych: 27szt.</span>
        </footer>

        <!-- Context menu -->
        <div class="menu main-menu">
            <button><svg class="ico"><use href="#openc"/></svg>Otwórz komponent</button>
            <button><svg class="ico"><use href="#opend"/></svg>Otwórz rysunek</button>
            <button class="more"><svg class="ico"><use href="#arrow"/></svg>Otwórz</button>
            <button><svg class="ico"><use href="#folder"/></svg>Pokaż w folderze</button>
            <hr>
            <button class="more hot"><svg class="ico"><use href="#bomx"/></svg>Wyklucz z listy materiałów</button>
            <hr>
            <button><svg class="ico"><use href="#tbon"/></svg>Oznacz jako 'plik Toolboxa'</button>
            <button><svg class="ico"><use href="#tboff"/></svg>Usuń oznaczenie 'plik Toolboxa'</button>
            <hr>
            <button class="more"><svg class="ico"><use href="#funnel"/></svg>Oznacz typ komponentu jako</button>
            <hr>
            <button class="more"><svg class="ico"><use href="#props"/></svg>Properties</button>
            <hr>
            <button><svg class="ico brown"><use href="#camera"/></svg>PIC</button>
            <hr>
            <button class="more"><svg class="ico"><use href="#nr"/></svg>*Nazwa BOM</button>
        </div>
        <div class="menu sub-menu">
            <button>Wyklucz z listy materiałów</button>
            <button>Dodaj wykluczone do listy materiałów</button>
        </div>

        <!-- Step marker -->
        <svg class="marker" width="110" height="150" viewBox="0 0 110 150">
            <path d="M55 58l-41 61-5-4-3 20 17-12-5-3 43-60z" fill="#f44"/>
            <ellipse cx="70" cy="36" rx="34" ry="32" fill="#f44"/>
            <text x="70" y="52" text-anchor="middle">5</text>
        </svg>
    </section>
</div>

</body>
</html>
```
FILE: styles.css
```css
* {
    box-sizing: border-box;
}

body {
    margin: 0;
    font-family: Roboto, Arial, sans-serif;
    font-size: 11px;
    color: #000;
    background: #fff;
}

button, select, input {
    font: inherit;
    color: inherit;
    margin: 0;
    padding: 0;
    border-radius: 0;
}

button {
    border: none;
    background: none;
}

.defs {
    position: absolute;
}

.ico {
    width: 20px;
    height: 20px;
    flex: none;
    display: block;
    color: #330;
}

.tag {
    font: bold 7px "Liberation Sans", sans-serif;
    fill: #330;
}

.nr {
    font: bold 12px "Liberation Serif", serif;
    fill: #111;
}

.app {
    display: grid;
    grid-template-columns: calc(50% - 37px) 1fr;
    height: 100vh;
    overflow: hidden;
}

/* Model view */
.view {
    display: flex;
    flex-direction: column;
    min-height: 0;
}

.view-bar {
    display: flex;
    align-items: center;
    gap: 6px;
    height: 28px;
    padding: 0 9px 0 52px;
}

.drop {
    width: 8px;
    display: flex;
    justify-content: center;
}

.drop::before {
    content: "";
    border: 3px solid transparent;
    border-top-color: #888;
    border-bottom: none;
}

.win-ctl {
    display: flex;
    gap: 6px;
    margin-left: auto;
}

.win-ctl path {
    fill: none;
    stroke: #999;
}

.win-ctl .tri {
    fill: #999;
    stroke: none;
}

.canvas {
    flex: 1;
    display: flex;
    min-height: 0;
}

.model {
    flex: 1;
    min-width: 0;
    height: 100%;
}

.rod path {
    stroke: #223;
    stroke-width: 9;
}

.rod .rod-in {
    stroke: #dde0f5;
    stroke-width: 5;
}

.rod .nut {
    stroke-width: 16;
}

.rod .nut-in {
    stroke: #dde0f5;
    stroke-width: 11;
}

.side {
    width: 26px;
    padding-top: 21px;
}

.side button {
    width: 100%;
    height: 24px;
    display: flex;
    align-items: center;
    justify-content: center;
    background: #d5d5d5;
    border: 1px solid #777;
    border-bottom: none;
}

.side .on {
    background: #fff;
    border-bottom: 1px solid #777;
    border-right: none;
}

.view-foot {
    height: 15px;
    background: #f7f7f7;
    border-top: 1px solid #777;
}

/* Pane */
.pane {
    position: relative;
    display: flex;
    flex-direction: column;
    min-width: 0;
    min-height: 0;
    background: #f7f7f7;
    border-left: 1px solid #777;
    padding-bottom: 1px;
}

.title {
    display: flex;
    align-items: center;
    height: 21px;
    padding: 0 1px 2px 5px;
    background: #abacb0;
    border-bottom: 1px solid #111;
}

.title h1 {
    flex: 1;
    margin: 0;
    text-align: center;
    font: bold 12px Roboto, sans-serif;
}

.macro {
    display: flex;
    align-items: center;
    gap: 8px;
    margin: 7px 8px 8px 16px;
}

.sq {
    width: 27px;
    height: 25px;
    display: flex;
    align-items: center;
    justify-content: center;
    background: #e1e1e1;
    border: 1px solid #adadad;
}

.macro .field {
    flex: 1;
}

.field {
    appearance: none;
    min-width: 0;
    height: 21px;
    padding: 0 20px 1px 2px;
    border: 1px solid #7a7a7a;
    background: #fff url("data:image/svg+xml,%3Csvg xmlns='http://www.w3.org/2000/svg' width='10' height='6'%3E%3Cpath d='M1 1l4 4 4-4' fill='none' stroke='%23444'/%3E%3C/svg%3E") no-repeat right 3px center;
}

.field:disabled {
    opacity: 1;
    color: #6d6d6d;
    border-color: #ccc;
    background: url("data:image/svg+xml,%3Csvg xmlns='http://www.w3.org/2000/svg' width='10' height='6'%3E%3Cpath d='M1 1l4 4 4-4' fill='none' stroke='%23aaa'/%3E%3C/svg%3E") no-repeat right 3px center, linear-gradient(#f0f0f0, #f0f0f0) no-repeat 2px 2px / calc(100% - 21px) calc(100% - 4px), #fff;
}

.tabs {
    display: flex;
    align-items: flex-end;
    height: 20px;
    margin-left: 12px;
}

.tab {
    height: 18px;
    padding: 0 4px;
    background: #f0f0f0;
    border: 1px solid #d9d9d9;
    border-bottom: none;
}

.tab.on {
    height: 21px;
    margin-bottom: -1px;
    padding: 0 13px 2px 7px;
    background: #fff;
    position: relative;
}

.page {
    flex: 1;
    min-height: 0;
    display: flex;
    flex-direction: column;
    margin: 0 5px 0 12px;
    padding: 2px 3px 4px 4px;
    background: #f7f7f7;
    border: 1px solid #d9d9d9;
    box-shadow: inset 0 0 0 2px #fff;
}

.load {
    flex: none;
    height: 25px;
    background: #e1e1e1;
    border: 1px solid #adadad;
}

.filter-tab {
    flex: none;
    align-self: flex-start;
    width: 46px;
    height: 33px;
    margin: 4px 0 -1px 2px;
    padding: 0 7px 4px;
    background: #fff;
    position: relative;
}

.filter {
    flex: none;
    margin: 0 3px 0 2px;
    padding: 12px 7px 16px 9px;
    border: 1px solid #d9d9d9;
    box-shadow: inset 0 0 0 2px #fff;
}

.types {
    display: flex;
    gap: 4px;
    height: 24px;
    margin-bottom: 9px;
}

.filter label {
    display: flex;
    align-items: center;
    gap: 3px;
    white-space: nowrap;
}

.cond {
    display: grid;
    grid-template-columns: 55px 179fr 27px 168fr 140fr 88px;
    column-gap: 5px;
    align-items: center;
    height: 36px;
}

.filter .cond label {
    gap: 4px;
}

.filter .cond .name {
    grid-column: span 2;
    gap: 3px;
}

.filter .name .ico {
    margin-right: -3px;
}

input[type="checkbox"], input[type="radio"] {
    appearance: none;
    flex: none;
    width: 13px;
    height: 13px;
    background: #fff;
    border: 1px solid #333;
}

input[type="checkbox"]:checked {
    background: #fff url("data:image/svg+xml,%3Csvg xmlns='http://www.w3.org/2000/svg' width='11' height='11'%3E%3Cpath d='M1.500 5.500l3 3 5-6' fill='none' stroke='%23333' stroke-width='1.300'/%3E%3C/svg%3E") no-repeat center;
}

input[type="checkbox"]:disabled {
    border-color: #ccc;
}

input[type="radio"] {
    border-radius: 50%;
}

input[type="radio"]:checked {
    background: radial-gradient(circle, #333 3px, #fff 4px);
}

.off {
    color: #6d6d6d;
}

.mid {
    margin-left: 5px !important;
}

.eq {
    height: 20px;
    background: #fff;
    border: 1px solid #7a7a7a;
}

.text {
    grid-column: span 3;
    height: 20px;
    border: 1px solid #7a7a7a;
    background: #fff;
}

.radios {
    display: flex;
    justify-content: space-between;
    padding-right: 14px;
    margin-left: -3px;
}

.and {
    padding-left: 2px;
}

/* Toolbars */
.tools {
    flex: none;
    display: flex;
    align-items: center;
    gap: 5px;
    height: 28px;
    margin-top: 11px;
    padding-left: 2px;
    background: linear-gradient(#fdfdfd, #f1f1f1);
}

.tools button {
    display: flex;
    align-items: center;
}

.grip {
    width: 3px;
    height: 16px;
    background: repeating-linear-gradient(#bbb 0 2px, transparent 2px 4px);
}

.sep {
    width: 1px;
    height: 17px;
    background: #bbb;
}

.caret {
    width: 8px;
    display: flex;
    justify-content: center;
}

.caret::before {
    content: "";
    border: 3px solid transparent;
    border-top-color: #000;
    border-bottom: none;
}

.tools .cam {
    gap: 4px;
}

.foot-tools {
    height: 25px;
    margin-top: 1px;
}

/* BOM list */
.list {
    flex: 1;
    min-height: 0;
    display: flex;
    margin-left: -1px;
    border: 1px solid #828790;
    background: #fff;
    overflow: hidden;
}

.rows {
    flex: 1;
    min-width: 0;
    overflow: hidden;
}

table {
    width: 100%;
    table-layout: fixed;
    border-collapse: separate;
    border-spacing: 0;
}

.c1 { width: 63px; }
.c2 { width: 106px; }
.c3 { width: 91px; }
.c4 { width: 100px; }
.c5 { width: 83px; }
.c6 { width: 87px; }
.c7 { width: 37px; }

th {
    height: 24px;
    padding: 1px 0 0 6px;
    text-align: left;
    font-weight: normal;
    white-space: nowrap;
    border-right: 1px solid #e5e5e5;
}

td {
    height: 21px;
    padding: 1px 0 0 6px;
    line-height: 14px;
    overflow: hidden;
    white-space: nowrap;
    background: #dcdcdc;
    border-right: 1px solid #f4f4f4;
    border-bottom: 1px solid #f4f4f4;
}

td:nth-child(8) {
    background: #90ee90;
    padding-left: 5px;
}

td .ico {
    display: inline-block;
    vertical-align: middle;
    margin: -4px 2px -4px -1px;
}

.sel td {
    color: #fff;
    background: #0078d7;
}

.sel td:first-child {
    background: linear-gradient(to right, #dcdcdc 25px, #0078d7 25px);
}

.sel .ico {
    color: #157;
}

.sel td:last-child {
    background: #dcdcdc;
}

.scroll {
    width: 17px;
    display: flex;
    flex-direction: column;
    background: #f0f0f0;
}

.track {
    flex: 1;
    display: flex;
    flex-direction: column;
}

.track::before {
    content: "";
    flex: 100;
}

.track::after {
    content: "";
    flex: 38;
}

.thumb {
    flex: 200;
    background: #cdcdcd;
}

.status {
    flex: none;
    display: flex;
    align-items: center;
    gap: 4px;
    height: 34px;
    margin: 3px 1px 0 7px;
    padding: 0 0 4px 5px;
    background: linear-gradient(#fdfdfd, #f1f1f1);
    border-bottom: 1px solid #666;
    font: 11px "Open Sans", sans-serif;
}

.status .ico + span {
    margin-left: 2px;
}

/* Menus */
.menu {
    position: absolute;
    padding: 1px;
    border: 1px solid #808080;
    background: linear-gradient(to right, #f1f1f1 28px, #fdfdfd 28px);
    box-shadow: 4px 4px 4px rgba(0, 0, 0, .5);
    font: 12px Roboto, sans-serif;
}

.menu button {
    display: flex;
    align-items: center;
    gap: 15px;
    width: 100%;
    height: 26px;
    padding-left: 2px;
    border: 1px solid transparent;
    white-space: nowrap;
}

.menu hr {
    height: 6px;
    margin: 0 0 0 35px;
    border: none;
    background: linear-gradient(#bdbdbd, #bdbdbd) no-repeat center / 100% 1px;
}

.menu .hot {
    background: #b5d7f3;
    border-color: #0078d7;
}

.more::after {
    content: "";
    margin: 0 9px 0 auto;
    border: 4px solid transparent;
    border-left-color: #000;
    border-right: none;
}

.brown {
    color: #420;
}

.main-menu {
    top: 480px;
    left: 121px;
    width: 299px;
}

.sub-menu {
    top: 592px;
    left: 419px;
    width: 274px;
    background: linear-gradient(to right, #f1f1f1 24px, #fdfdfd 24px);
}

.sub-menu button {
    height: 22px;
    padding-left: 33px;
}

.marker {
    position: absolute;
    top: 463px;
    left: 488px;
    filter: drop-shadow(2px 3px 3px rgba(0, 0, 0, .6));
}

.marker text {
    font: 44px "Liberation Sans", sans-serif;
    fill: #fff;
}
```
